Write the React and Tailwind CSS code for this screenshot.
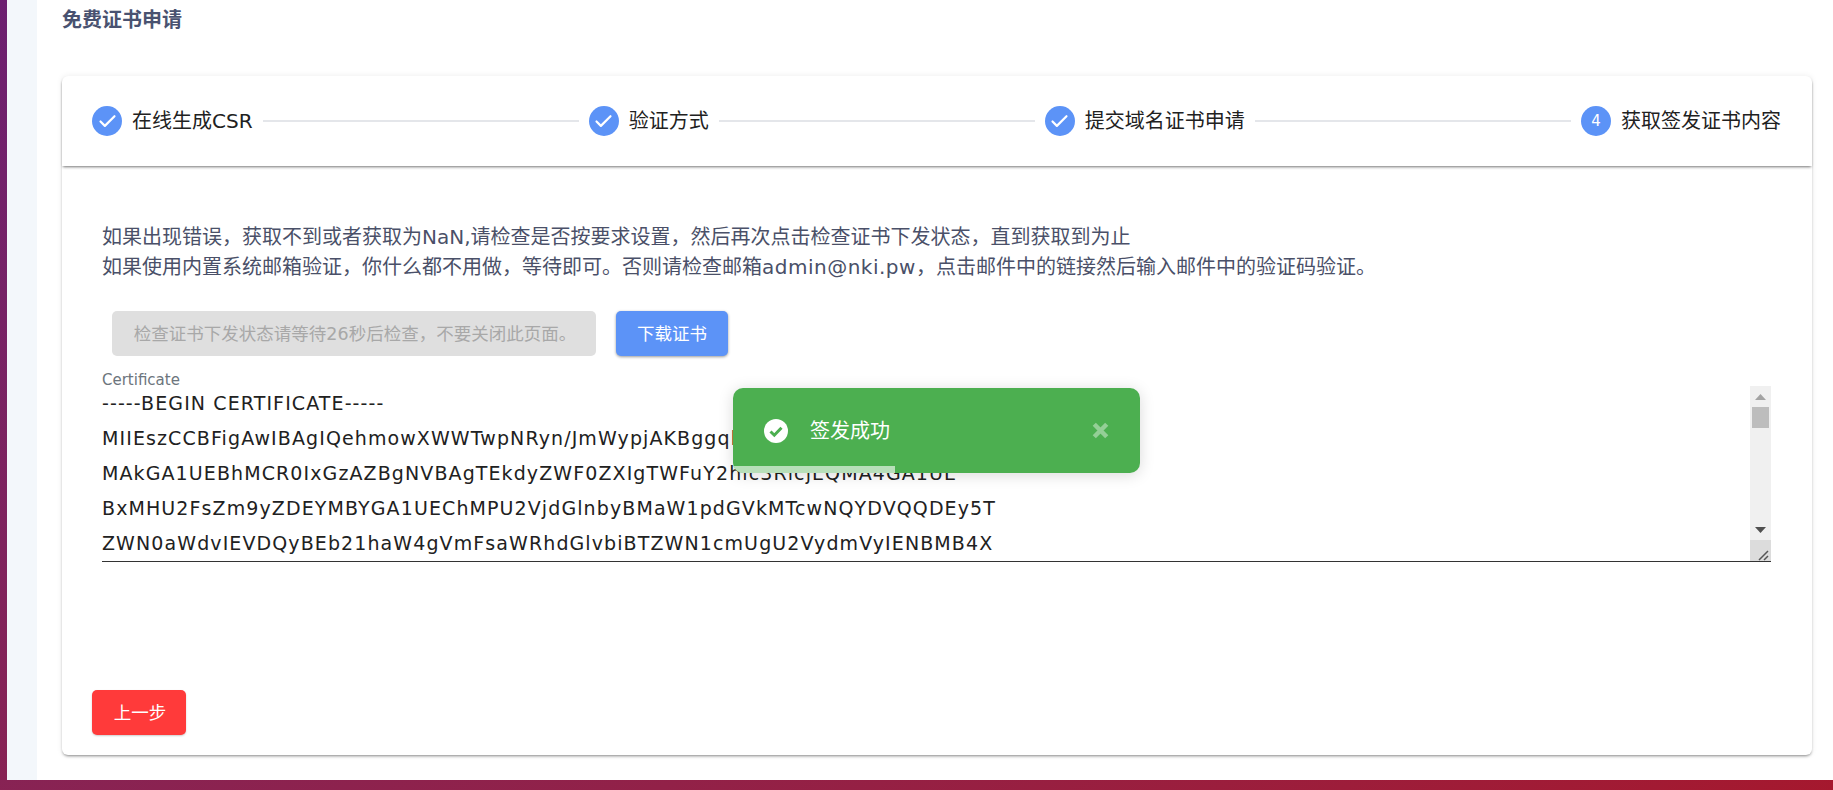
import React from "react";
import { Check } from "lucide-react";

const certLines = [
    "-----BEGIN CERTIFICATE-----",
    "MIIEszCCBFigAwIBAgIQehmowXWWTwpNRyn/JmWypjAKBggqhkjOPQQDAjBLMQsw",
    "MAkGA1UEBhMCR0IxGzAZBgNVBAgTEkdyZWF0ZXIgTWFuY2hlc3RlcjEQMA4GA1UE",
    "BxMHU2FsZm9yZDEYMBYGA1UEChMPU2VjdGlnbyBMaW1pdGVkMTcwNQYDVQQDEy5T",
    "ZWN0aWdvIEVDQyBEb21haW4gVmFsaWRhdGlvbiBTZWN1cmUgU2VydmVyIENBMB4X",
];

const Step = ({ label, num }) => (
    <div className="flex items-center gap-[10px] shrink-0">
        <div className="w-[30px] h-[30px] rounded-full bg-[#5c93f7] text-white flex items-center justify-center text-[15px]">
            {num ? num : <Check size={21} strokeWidth={2.5} />}
        </div>
        <span className="text-[20px] leading-[30px] text-[#212121]">{label}</span>
    </div>
);

const Line = () => <div className="flex-1 h-[2px] mx-[10px] bg-[#e4e6ea]" />;

// Fake scrollbar column beside the certificate text
const ScrollBar = () => (
    <div className="w-[21px] shrink-0 flex flex-col bg-[#f0f0f0]">
        <div className="h-[21px] flex items-center justify-center">
            <svg width="11" height="6" viewBox="0 0 11 6"><path d="M5.5 0L11 6H0z" fill="#a3a3a3" /></svg>
        </div>
        <div className="h-[21px] mx-[2px] bg-[#bdbdbd]" />
        <div className="flex-1" />
        <div className="h-[21px] flex items-center justify-center">
            <svg width="11" height="6" viewBox="0 0 11 6"><path d="M0 0H11L5.5 6z" fill="#505050" /></svg>
        </div>
        <div className="h-[21px] bg-[#dcdcdc] flex items-end justify-end">
            <svg width="14" height="12" viewBox="0 0 14 12">
                <path d="M2 11L11 2M7 11L11 7" stroke="#555" strokeWidth="1.5" fill="none" />
            </svg>
        </div>
    </div>
);

export default function App() {
    return (
        <div
            className="relative w-full h-[790px] overflow-hidden flex flex-col bg-gradient-to-br from-[#6c1f70] to-[#a5182e] text-[#212121]"
            style={{ fontFamily: '"DejaVu Sans", "Noto Sans CJK SC", sans-serif' }}
        >
            <div className="flex h-[780px] pl-[7px]">
                <div className="w-[30px] shrink-0 bg-[#f3f7fb]" />
                <main className="flex-1 flex flex-col bg-white pl-[25px] pr-[21px]">
                    <h1 className="h-[76px] shrink-0 pt-[5px] text-[20px] leading-[30px] font-bold text-[#495270]">免费证书申请</h1>

                    <div className="h-[679px] flex flex-col bg-white rounded-[6px] shadow-[0_2px_3px_-1px_rgba(0,0,0,0.45),0_0_6px_rgba(0,0,0,0.08)]">
                        <div className="h-[90px] shrink-0 flex items-center pl-[30px] pr-[31px] rounded-t-[6px] shadow-[0_2px_3px_-1px_rgba(0,0,0,0.55)]">
                            <Step label="在线生成CSR" />
                            <Line />
                            <Step label="验证方式" />
                            <Line />
                            <Step label="提交域名证书申请" />
                            <Line />
                            <Step label="获取签发证书内容" num="4" />
                        </div>

                        <div className="flex-1 flex flex-col pl-[40px] pr-[41px]">
                            <p className="mt-[56px] text-[20px] leading-[30px] text-[#4a5068] whitespace-nowrap">
                                如果出现错误，获取不到或者获取为NaN,请检查是否按要求设置，然后再次点击检查证书下发状态，直到获取到为止
                                <br />
                                如果使用内置系统邮箱验证，你什么都不用做，等待即可。否则请检查邮箱<span className="tracking-[0.5px]">admin@nki.pw</span>，点击邮件中的链接然后输入邮件中的验证码验证。
                            </p>

                            <div className="mt-[29px] ml-[10px] flex gap-[20px]">
                                <button className="h-[45px] w-[484px] pl-[2px] pt-[2px] rounded-[5px] bg-[#dfdfdf] text-[#a8a8a8] text-[17.5px] whitespace-nowrap">
                                    检查证书下发状态请等待26秒后检查，不要关闭此页面。
                                </button>
                                <button className="h-[45px] w-[112px] pt-[2px] rounded-[5px] bg-[#5c93f7] text-white text-[17.5px] shadow-[0_1px_3px_rgba(0,0,0,0.4)]">
                                    下载证书
                                </button>
                            </div>

                            <label className="mt-[18px] text-[15px] leading-[12px] text-[#6c757d]">Certificate</label>
                            <div className="flex h-[176px] border-b border-[#333]">
                                <div className="flex-1 overflow-hidden text-[19px] tracking-[1.1px] leading-[35px] text-[#212121] whitespace-nowrap">
                                    {certLines.map((line) => (
                                        <div key={line}>{line}</div>
                                    ))}
                                </div>
                                <ScrollBar />
                            </div>

                            <div className="mt-auto mb-[20px] -ml-[10px]">
                                <button className="h-[45px] w-[94px] pl-[2px] pt-[1px] rounded-[5px] bg-[#ff3a3a] text-white text-[17.5px] shadow-[0_1px_2px_rgba(0,0,0,0.2)]">
                                    上一步
                                </button>
                            </div>
                        </div>
                    </div>
                </main>
            </div>

            {/* Toast over the content */}
            <div className="absolute left-[733px] top-[388px] w-[407px] h-[85px] rounded-[10px] overflow-hidden bg-[#4caf50] text-white shadow-[0_2px_15px_rgba(0,0,0,0.15)] flex items-center">
                <svg className="ml-[31px] shrink-0" width="24" height="24" viewBox="0 0 24 24">
                    <circle cx="12" cy="12" r="12" fill="#fff" />
                    <path d="M6.5 12.5L10.3 16.2L17.5 8.8" stroke="#4caf50" strokeWidth="3" fill="none" />
                </svg>
                <span className="ml-[22px] text-[20px]">签发成功</span>
                <svg className="ml-auto mr-[31px] shrink-0 opacity-40" width="17" height="17" viewBox="0 0 15 15">
                    <path d="M2 2L13 13M13 2L2 13" stroke="#fff" strokeWidth="4" />
                </svg>
                <div className="absolute left-0 bottom-0 h-[7px] w-[162px] bg-white/60" />
            </div>
        </div>
    );
}
